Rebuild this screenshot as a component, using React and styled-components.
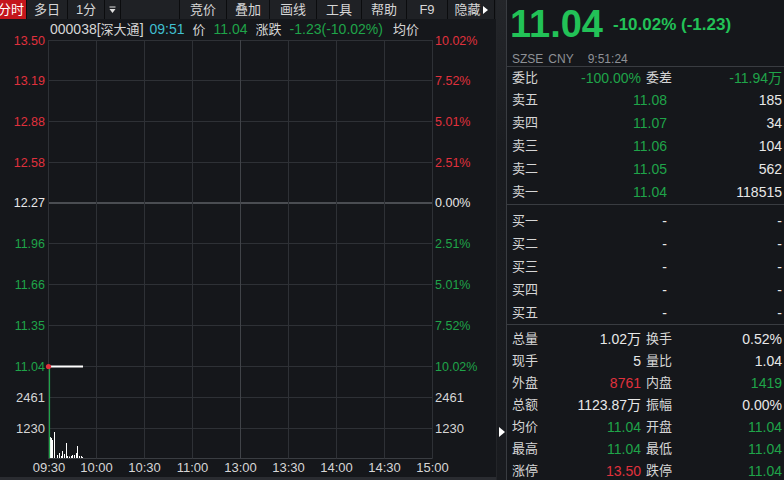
import React from "react";
import styled, { createGlobalStyle } from "styled-components";

const C = {
  bg: "#15171b",
  bar: "#1f2125",
  sep: "#0b0c0e",
  grid: "#2e3136",
  gridHi: "#4a4d52",
  line: "#393c41",
  text: "#d6d6d6",
  white: "#e8e8e8",
  dim: "#8e9196",
  red: "#e0313d",
  green: "#1fa449",
  bright: "#22c257",
  cyan: "#40bfd0",
  active: "#c4161c",
};

const Global = createGlobalStyle`
  html, body { margin: 0; padding: 0; background: ${C.bg}; overflow: hidden; }
  #root { width: 784px; height: 480px; }
  * { box-sizing: border-box; }
`;

const Screen = styled.div`
  display: grid;
  grid-template-columns: 496px 10px 278px;
  width: 784px;
  height: 480px;
  overflow: hidden;
  background: ${C.bg};
  color: ${C.text};
  font-family: "Liberation Sans", "Noto Sans CJK SC", sans-serif;
`;

/* ---------- left: toolbar + chart ---------- */
const LeftPanel = styled.div`
  display: flex;
  flex-direction: column;
  overflow: hidden;
`;

const Toolbar = styled.div`
  display: flex;
  height: 19px;
  flex: none;
  background: ${C.bar};
  overflow: hidden;
`;

const Tab = styled.div`
  flex: none;
  width: ${(p) => p.$w}px;
  margin-left: ${(p) => p.$offset || 0}px;
  height: 19px;
  display: flex;
  align-items: center;
  justify-content: center;
  gap: 2px;
  border-right: 1px solid ${C.sep};
  background: ${(p) => (p.$active ? C.active : "transparent")};
  color: ${(p) => (p.$active ? "#ffffff" : C.text)};
  font-size: 13px;
  line-height: 19px;
  white-space: nowrap;
`;

const RightTri = styled.span`
  display: inline-block;
  width: 0;
  height: 0;
  border-left: 5px solid #ffffff;
  border-top: 4px solid transparent;
  border-bottom: 4px solid transparent;
`;

const ChartHeader = styled.div`
  height: 21px;
  flex: none;
  display: flex;
  align-items: center;
  gap: 8px;
  padding-left: 50px;
  white-space: nowrap;
`;

const Info = styled.span`
  font-size: ${(p) => (p.$cjk ? 13 : 14)}px;
  line-height: 21px;
  color: ${(p) =>
    p.$tone === "green" ? C.green : p.$tone === "cyan" ? C.cyan : C.text};
  margin-left: ${(p) => p.$ml || 0}px;
`;

const ChartSvg = styled.svg`
  display: block;
  flex: none;
  overflow: visible;
`;

const ScrollStrip = styled.div`
  height: 3px;
  flex: none;
  background: #2a2c31;
`;

/* ---------- divider ---------- */
const Divider = styled.div`
  display: flex;
  align-items: flex-end;
  justify-content: center;
  padding-bottom: 43px;
  background: linear-gradient(180deg, #24262a 0%, #1a1c20 30%, #191b1f 100%);
  border-left: 1px solid #232529;
`;

const DividerArrow = styled.span`
  width: 0;
  height: 0;
  border-left: 6px solid #ffffff;
  border-top: 5px solid transparent;
  border-bottom: 5px solid transparent;
  margin-left: 1px;
`;

/* ---------- right: quote panel ---------- */
const RightPanel = styled.div`
  display: flex;
  flex-direction: column;
  border-left: 1px solid ${C.line};
  overflow: hidden;
`;

const QuoteHeader = styled.div`
  flex: none;
  border-bottom: 1px solid ${C.line};
`;

const PriceRow = styled.div`
  height: 53px;
  display: flex;
  align-items: flex-start;
  gap: 10px;
  padding-left: 3px;
`;

const BigPrice = styled.span`
  margin-top: 5px;
  font-size: 38px;
  line-height: 38px;
  font-weight: bold;
  color: ${C.bright};
`;

const Change = styled.span`
  margin-top: 16px;
  font-size: 17px;
  line-height: 18px;
  font-weight: bold;
  color: ${C.bright};
  white-space: nowrap;
`;

const Meta = styled.div`
  height: 13px;
  display: flex;
  align-items: center;
  gap: 5px;
  padding-left: 5px;
  font-size: 12px;
  line-height: 13px;
  color: ${C.dim};
`;

const MetaItem = styled.span`
  margin-left: ${(p) => p.$ml || 0}px;
`;

const Section = styled.div`
  flex: none;
  padding-top: ${(p) => p.$pt || 0}px;
  padding-bottom: ${(p) => p.$pb || 0}px;
  border-bottom: ${(p) => (p.$border ? `1px solid ${C.line}` : "none")};
`;

const BookRow = styled.div`
  display: grid;
  grid-template-columns: 40px 115px 1fr;
  align-items: center;
  height: 23px;
  padding: 0 2px 0 5px;
`;

const StatRow = styled.div`
  display: grid;
  grid-template-columns: 36px 93px 5px 36px 1fr;
  align-items: center;
  height: ${(p) => p.$h || 22}px;
  padding: 0 2px 0 5px;
`;

const Label = styled.span`
  font-size: 13px;
  line-height: 16px;
  color: ${C.text};
  white-space: nowrap;
  grid-column: ${(p) => p.$col || "auto"};
`;

const Num = styled.span`
  text-align: right;
  font-size: 14px;
  line-height: 16px;
  white-space: nowrap;
  color: ${(p) =>
    p.$tone === "green" ? C.green : p.$tone === "red" ? C.red : C.white};
  grid-column: ${(p) => p.$col || "auto"};
`;

/* ---------- chart drawing ---------- */
const TOP = 40; // page y of svg top
const priceRows = [
  { y: 40.5, p: "13.50", pct: "10.02%", tone: "red" },
  { y: 80.5, p: "13.19", pct: "7.52%", tone: "red" },
  { y: 121.5, p: "12.88", pct: "5.01%", tone: "red" },
  { y: 162.5, p: "12.58", pct: "2.51%", tone: "red" },
  { y: 203, p: "12.27", pct: "0.00%", tone: "white", mid: true },
  { y: 243.5, p: "11.96", pct: "2.51%", tone: "green" },
  { y: 284.5, p: "11.66", pct: "5.01%", tone: "green" },
  { y: 325.5, p: "11.35", pct: "7.52%", tone: "green" },
  { y: 366.5, p: "11.04", pct: "10.02%", tone: "green" },
];
const volRows = [
  { y: 397.5, v: "2461" },
  { y: 428.5, v: "1230" },
];
const times = ["09:30", "10:00", "10:30", "11:00", "13:00", "13:30", "14:00", "14:30", "15:00"];
const vx = [48.5, 96.5, 144.5, 192.5, 240.5, 288.5, 336.5, 384.5, 432.5];
const AXIS = 458.5;
const bars = [
  [50, 21], [51, 20], [52, 18], [54, 26], [57, 3], [59, 5], [61, 2], [62, 7],
  [64, 4], [66, 15], [67, 2], [69, 1.5], [71, 2], [72, 3], [74, 3], [76, 5],
  [77, 12], [79, 2], [81, 2], [82, 1],
];
const toneColor = (t) => (t === "red" ? C.red : t === "green" ? C.green : C.white);

function Chart() {
  const y = (v) => v - TOP;
  return (
    <ChartSvg width="496" height="437" viewBox="0 0 496 437">
      {priceRows.map((r) => (
        <line key={r.p + "g"} x1="48" x2="432.5" y1={y(r.y)} y2={y(r.y)}
          stroke={r.mid ? C.gridHi : C.grid} strokeWidth={r.mid ? 2 : 1} />
      ))}
      {volRows.map((r) => (
        <line key={r.v + "g"} x1="48" x2="432.5" y1={y(r.y)} y2={y(r.y)} stroke={C.grid} strokeWidth="1" />
      ))}
      <line x1="48" x2="432.5" y1={y(AXIS)} y2={y(AXIS)} stroke="#3a3d42" strokeWidth="1" />
      {vx.map((x, i) => (
        <line key={x} x1={x} x2={x} y1={y(40)} y2={y(AXIS)}
          stroke={i === 4 ? "#404348" : C.grid} strokeWidth="1" />
      ))}

      {priceRows.map((r) => (
        <text key={r.p} x="45" y={y(r.y)} textAnchor="end" dominantBaseline="central"
          fontSize="12.5" fill={toneColor(r.tone)}>{r.p}</text>
      ))}
      {priceRows.map((r) => (
        <text key={r.p + "%"} x="435" y={y(r.y)} dominantBaseline="central"
          fontSize="12.5" fill={toneColor(r.tone)}>{r.pct}</text>
      ))}
      {volRows.map((r) => (
        <g key={r.v}>
          <text x="45" y={y(r.y)} textAnchor="end" dominantBaseline="central" fontSize="13" fill={C.text}>{r.v}</text>
          <text x="435" y={y(r.y)} dominantBaseline="central" fontSize="13" fill={C.text}>{r.v}</text>
        </g>
      ))}
      {times.map((t, i) => (
        <text key={t} x={i === 0 ? 49 : vx[i]} y={y(467.5)} textAnchor="middle" dominantBaseline="central"
          fontSize="13" fill={C.text}>{t}</text>
      ))}

      {bars.map(([x, h]) => (
        <rect key={x} x={x} y={y(458) - h} width="1" height={h} fill="#ffffff" />
      ))}
      <line x1="49.5" x2="49.5" y1={y(366)} y2={y(458)} stroke={C.green} strokeWidth="1.2" />
      <line x1="49" x2="83" y1={y(366.5)} y2={y(366.5)} stroke="#ffffff" strokeWidth="2" />
      <circle cx="48.5" cy={y(366.5)} r="2.6" fill={C.red} />
    </ChartSvg>
  );
}

function DropGlyph() {
  return (
    <svg width="7" height="8" viewBox="0 0 7 8">
      <rect x="0.5" y="0.5" width="6" height="1" fill="#e0e0e0" />
      <polygon points="0.5,3 6.5,3 3.5,7" fill="#e0e0e0" />
    </svg>
  );
}

const sells = [
  ["卖五", "11.08", "185"],
  ["卖四", "11.07", "34"],
  ["卖三", "11.06", "104"],
  ["卖二", "11.05", "562"],
  ["卖一", "11.04", "118515"],
];
const buys = ["买一", "买二", "买三", "买四", "买五"];
const stats = [
  ["总量", "1.02万", "", "换手", "0.52%", ""],
  ["现手", "5", "", "量比", "1.04", ""],
  ["外盘", "8761", "red", "内盘", "1419", "green"],
  ["总额", "1123.87万", "", "振幅", "0.00%", ""],
  ["均价", "11.04", "green", "开盘", "11.04", "green"],
  ["最高", "11.04", "green", "最低", "11.04", "green"],
  ["涨停", "13.50", "red", "跌停", "11.04", "green"],
];

export default function App() {
  return (
    <>
      <Global />
      <Screen>
        <LeftPanel>
          <Toolbar>
            <Tab $w={31} $offset={-4} $active>分时</Tab>
            <Tab $w={41}>多日</Tab>
            <Tab $w={37}>1分</Tab>
            <Tab $w={16}><DropGlyph /></Tab>
            <Tab $w={59} />
            <Tab $w={47}>竞价</Tab>
            <Tab $w={43}>叠加</Tab>
            <Tab $w={47}>画线</Tab>
            <Tab $w={45}>工具</Tab>
            <Tab $w={45}>帮助</Tab>
            <Tab $w={41}>F9</Tab>
            <Tab $w={47}>隐藏<RightTri /></Tab>
          </Toolbar>
          <ChartHeader>
            <span>
              <Info>000038[</Info>
              <Info $cjk>深大通</Info>
              <Info>]</Info>
            </span>
            <Info $tone="cyan" $ml={-2}>09:51</Info>
            <Info $cjk>价</Info>
            <Info $tone="green">11.04</Info>
            <Info $cjk>涨跌</Info>
            <Info $tone="green">-1.23(-10.02%)</Info>
            <Info $cjk $ml={2}>均价</Info>
          </ChartHeader>
          <Chart />
          <ScrollStrip />
        </LeftPanel>

        <Divider>
          <DividerArrow />
        </Divider>

        <RightPanel>
          <QuoteHeader>
            <PriceRow>
              <BigPrice>11.04</BigPrice>
              <Change>-10.02% (-1.23)</Change>
            </PriceRow>
            <Meta>
              <MetaItem>SZSE</MetaItem>
              <MetaItem>CNY</MetaItem>
              <MetaItem $ml={9}>9:51:24</MetaItem>
            </Meta>
          </QuoteHeader>

          <Section>
            <StatRow $h={21}>
              <Label>委比</Label>
              <Num $tone="green">-100.00%</Num>
              <Label $col="4">委差</Label>
              <Num $tone="green">-11.94万</Num>
            </StatRow>
          </Section>

          <Section $pb={1} $border>
            {sells.map(([l, p, v]) => (
              <BookRow key={l}>
                <Label>{l}</Label>
                <Num $tone="green">{p}</Num>
                <Num>{v}</Num>
              </BookRow>
            ))}
          </Section>

          <Section $pt={4} $border>
            {buys.map((l) => (
              <BookRow key={l}>
                <Label>{l}</Label>
                <Num>-</Num>
                <Num>-</Num>
              </BookRow>
            ))}
          </Section>

          <Section $pt={3}>
            {stats.map(([l1, v1, t1, l2, v2, t2]) => (
              <StatRow key={l1}>
                <Label>{l1}</Label>
                <Num $tone={t1}>{v1}</Num>
                <Label $col="4">{l2}</Label>
                <Num $tone={t2}>{v2}</Num>
              </StatRow>
            ))}
          </Section>
        </RightPanel>
      </Screen>
    </>
  );
}
